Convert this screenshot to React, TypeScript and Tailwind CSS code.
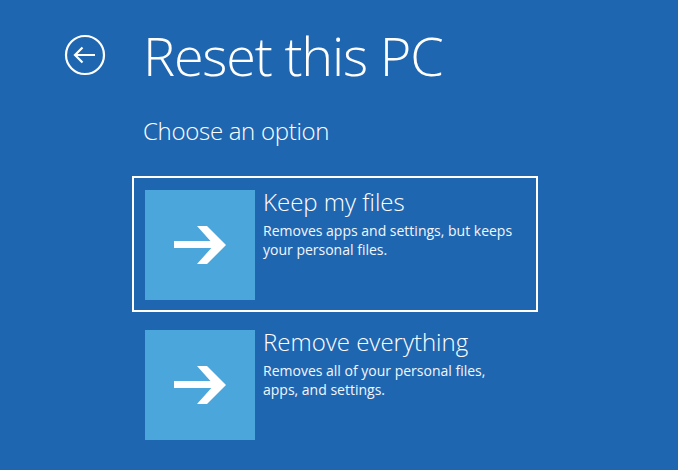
const options = [
  {
    title: 'Keep my files',
    lines: ['Removes apps and settings, but keeps', 'your personal files.'],
    selected: true,
  },
  {
    title: 'Remove everything',
    lines: ['Removes all of your personal files,', 'apps, and settings.'],
    selected: false,
  },
];

function BackIcon() {
  return (
    <svg width="42" height="42" viewBox="0 0 42 42" fill="none" stroke="white" strokeWidth="2.2">
      <circle cx="21" cy="21" r="19" />
      <path d="M31 21H11M18.5 13.5 11 21l7.5 7.5" />
    </svg>
  );
}

function TileArrow() {
  return (
    <svg width="52" height="38" viewBox="0 0 52 38" fill="white">
      <rect x="0" y="15" width="42" height="7" />
      <polygon points="23,0 33,0 52,19 33,38 23,38 40,19" />
    </svg>
  );
}

export default function App() {
  return (
    <div
      className="h-[470px] w-[678px] overflow-hidden bg-[#1f66b1] text-white"
      style={{ fontFamily: '"Segoe UI", "Open Sans", "Noto Sans", sans-serif' }}
    >
      <div className="flex items-center pt-[22px]">
        <div className="ml-[64px] w-[79px]">
          <BackIcon />
        </div>
        <h1 className="text-[54px] leading-[66px] font-light tracking-[-1.2px]">Reset this PC</h1>
      </div>
      <p className="mt-[28px] ml-[143px] text-[24px] leading-[30px] font-light tracking-[-0.3px]">Choose an option</p>
      <div className="mt-[30px] ml-[132px] flex w-[406px] flex-col gap-[4px]">
        {options.map((o) => (
          <div
            key={o.title}
            className={`flex h-[136px] border-2 pt-[12px] pl-[11px] ${o.selected ? 'border-white' : 'border-transparent'}`}
          >
            <div className="grid size-[110px] shrink-0 place-items-center bg-[#4ba6dc]">
              <TileArrow />
            </div>
            <div className="ml-[8px]">
              <p className="-mt-[1px] text-[24px] leading-[26px] font-light">{o.title}</p>
              <p className="mt-[6px] text-[14px] leading-[19px] text-[#f2f6fc]">
                {o.lines[0]}
                <br />
                {o.lines[1]}
              </p>
            </div>
          </div>
        ))}
      </div>
    </div>
  );
}
